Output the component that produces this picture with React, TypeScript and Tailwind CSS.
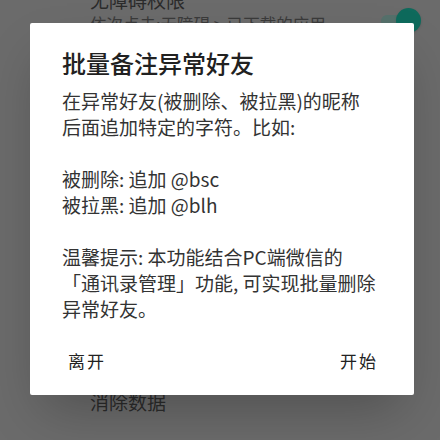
import React from 'react';

const font = { fontFamily: '"Noto Sans CJK SC", "Noto Sans", sans-serif' };

function Toggle() {
  return (
    <div className="relative mt-[21px] w-[40px] h-[25px] flex items-center">
      <div className="w-[32px] h-[12px] rounded-full bg-[#55706b]" />
      <div className="absolute right-0 top-0 w-[25px] h-[25px] rounded-full bg-[#0e6a5c] shadow" />
    </div>
  );
}

export default function App() {
  return (
    <div className="relative w-[440px] h-[440px] overflow-hidden bg-[#6b6b6b]" style={font}>
      {/* Settings page behind the scrim */}
      <div className="h-full flex flex-col pl-[90px] pr-[19px]">
        <div className="-mt-[13px] flex items-start justify-between">
          <div className="flex flex-col">
            <span className="text-[19px] leading-[26px] text-[#2b2b2b]">无障碍权限</span>
            <span className="text-[16.5px] leading-[22px] text-[#3a3a3a]">依次点击:无障碍 &gt; 已下载的应用</span>
          </div>
          <Toggle />
        </div>
        <span className="mt-auto mb-[25px] text-[19px] leading-[26px] text-[#2b2b2b]">消除数据</span>
      </div>

      {/* Dialog */}
      <div className="absolute inset-0 pl-[30px] pt-[23px]">
        <div className="w-[384px] h-[372px] bg-white rounded-[2px] shadow-2xl flex flex-col px-[32px] pt-[24px]">
          <h1 className="text-[24px] leading-[32px] font-medium text-[#212121]">批量备注异常好友</h1>
          <div className="mt-[9px] text-[19px] leading-[26px] text-[#333]">
            <p>在异常好友(被删除、被拉黑)的昵称</p>
            <p>后面追加特定的字符。比如:</p>
            <p>&nbsp;</p>
            <p>被删除: 追加 @bsc</p>
            <p>被拉黑: 追加 @blh</p>
            <p>&nbsp;</p>
            <p>温馨提示: 本功能结合PC端微信的</p>
            <p>「通讯录管理」功能, 可实现批量删除</p>
            <p>异常好友。</p>
          </div>
          <div className="mt-auto mb-[22px] flex justify-between text-[17px] leading-[24px] text-[#222] pl-[6px] pr-[4px]">
            <button className="tracking-[2px]">离开</button>
            <button className="tracking-[2px]">开始</button>
          </div>
        </div>
      </div>
    </div>
  );
}
